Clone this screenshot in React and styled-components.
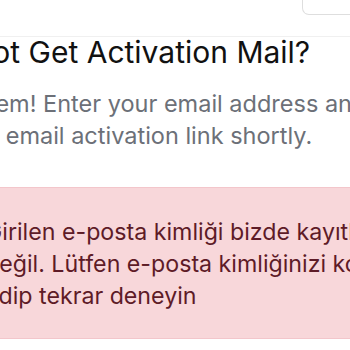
import React from "react";
import styled, { createGlobalStyle } from "styled-components";

const GlobalStyle = createGlobalStyle`
  html, body {
    margin: 0;
    padding: 0;
    background: #ffffff;
    overflow: hidden;
  }
  body {
    font-family: Inter, "Noto Sans", "Liberation Sans", sans-serif;
    -webkit-font-smoothing: antialiased;
  }
`;

const Page = styled.div`
  width: 350px;
  height: 350px;
  overflow: hidden;
`;

const Header = styled.header`
  display: flex;
  justify-content: flex-end;
  align-items: flex-start;
  height: 36px;
  border-bottom: 1px solid #f0f0f0;
`;

const HeaderControl = styled.div`
  width: 62px;
  height: 14px;
  margin-right: -16px;
  border: 1px solid #dedede;
  border-top: none;
  border-radius: 0 0 7px 7px;
  background: #ffffff;
`;

const Main = styled.main`
  display: flex;
  flex-direction: column;
  align-items: flex-start;
  width: 720px;
  margin-left: -86px;
`;

const Title = styled.h1`
  margin: 0;
  font-size: 30px;
  line-height: 30px;
  font-weight: 400;
  color: #111111;
  white-space: nowrap;
`;

const Lead = styled.p`
  display: flex;
  flex-direction: column;
  margin: 21px 0 0 -14px;
  font-size: 23.5px;
  line-height: 32px;
  color: #6c7078;
  white-space: nowrap;
`;

const LeadLine = styled.span`
  padding-left: ${(p) => p.$indent || 0}px;
`;

const Alert = styled.div`
  box-sizing: border-box;
  width: 600px;
  margin: 35px 0 0 50px;
  padding: 28px 20px 26px;
  background: #f8d7da;
  border: 1px solid #f3c6cb;
  color: #5e1b27;
  font-size: 23.2px;
  line-height: 32px;
  white-space: nowrap;
`;

export default function App() {
  return (
    <>
      <GlobalStyle />
      <Page>
        <Header>
          <HeaderControl />
        </Header>
        <Main>
          <Title>Did Not Get Activation Mail?</Title>
          <Lead>
            <LeadLine>No problem! Enter your email address and we'll send you</LeadLine>
            <LeadLine $indent={72}>an email activation link shortly.</LeadLine>
          </Lead>
          <Alert>
            Girilen e-posta kimliği bizde kayıtlı
            <br />
            değil. Lütfen e-posta kimliğinizi kontrol
            <br />
            edip tekrar deneyin
          </Alert>
        </Main>
      </Page>
    </>
  );
}
